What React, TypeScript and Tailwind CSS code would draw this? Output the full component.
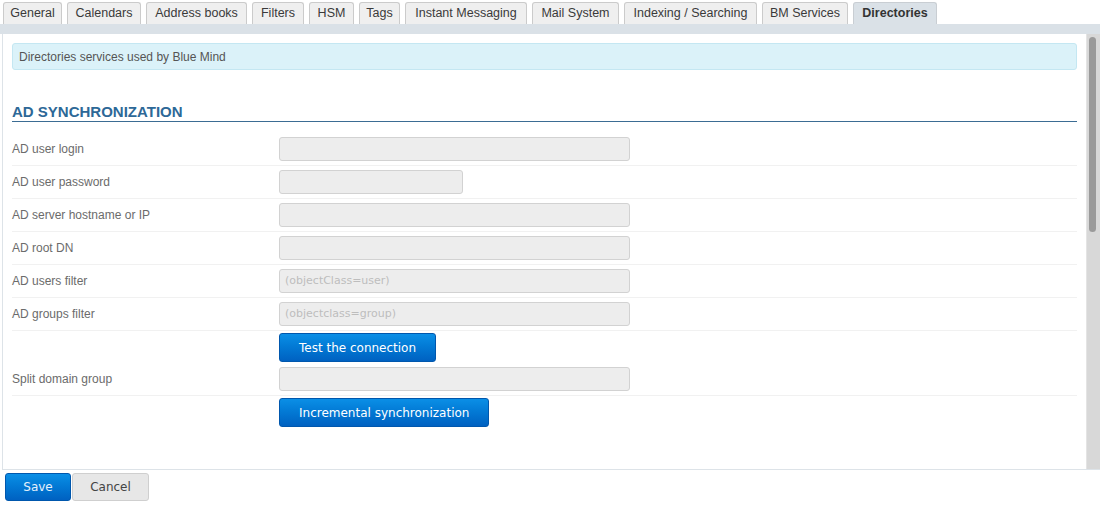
const tabs = [
  { label: "General", w: "w-[59px]" },
  { label: "Calendars", w: "w-[74px]" },
  { label: "Address books", w: "w-[101px]" },
  { label: "Filters", w: "w-[52px]" },
  { label: "HSM", w: "w-[45px]" },
  { label: "Tags", w: "w-[41px]" },
  { label: "Instant Messaging", w: "w-[122px]" },
  { label: "Mail System", w: "w-[87px]" },
  { label: "Indexing / Searching", w: "w-[133px]" },
  { label: "BM Services", w: "w-[86px]" },
  { label: "Directories", w: "w-[84px]", active: true },
];

function Field({ label, width = "w-[351px]", placeholder = "" }: { label: string; width?: string; placeholder?: string }) {
  return (
    <div className="flex items-center py-[4px] border-b border-[#f1f1f1]">
      <div className="w-[267px] text-[12px] text-[#6b6b6b]">{label}</div>
      <div
        className={`${width} h-[24px] rounded-[3px] border border-[#d2d2d2] bg-[#ededed] flex items-center px-[5px] font-['DejaVu_Sans',sans-serif] text-[11px] text-[#bdbdbd]`}
      >
        {placeholder}
      </div>
    </div>
  );
}

function BlueButton({ children, className = "" }: { children: React.ReactNode; className?: string }) {
  return (
    <button
      className={`h-[29px] px-[19px] rounded-[3px] border border-[#0057ad] bg-linear-to-b from-[#0b8fe6] to-[#0061c1] text-white font-['DejaVu_Sans',sans-serif] text-[12px] ${className}`}
    >
      {children}
    </button>
  );
}

export default function App() {
  return (
    <div className="w-[1100px] h-[508px] bg-white flex flex-col font-['Liberation_Sans',Arial,sans-serif] overflow-hidden">
      {/* tabs */}
      <div className="flex gap-[5px] pt-[2px] pl-[3px]">
        {tabs.map((t) => (
          <div
            key={t.label}
            className={
              t.active
                ? `${t.w} h-[22px] flex items-center justify-center rounded-t-[3px] border border-b-0 border-[#c9ced3] bg-[#dae1e7] text-[12.5px] font-bold text-[#333]`
                : `${t.w} h-[22px] flex items-center justify-center rounded-t-[3px] border border-b-0 border-[#cbcbcb] bg-[#efefef] text-[12.5px] text-[#3a3a3a]`
            }
          >
            {t.label}
          </div>
        ))}
      </div>
      <div className="h-[10px] bg-[#dae1e7]" />

      {/* panel */}
      <div className="flex h-[436px] ml-[2px] border-l border-b border-[#dde3e8]">
        <div className="flex-1 p-[9px]">
          <div className="h-[27px] flex items-center px-[6px] rounded-[3px] border border-[#c4e7f2] bg-[#dbf2f9] text-[12px] text-[#555]">
            Directories services used by Blue Mind
          </div>

          <h2 className="mt-[33px] leading-[18px] text-[15px] font-bold text-[#2d6897] border-b border-[#3b6c93]">
            AD SYNCHRONIZATION
          </h2>

          <div className="mt-[11px] flex flex-col">
            <Field label="AD user login" />
            <Field label="AD user password" width="w-[184px]" />
            <Field label="AD server hostname or IP" />
            <Field label="AD root DN" />
            <Field label="AD users filter" placeholder="(objectClass=user)" />
            <Field label="AD groups filter" placeholder="(objectclass=group)" />
            <div className="flex pt-[2px] pb-[1px] pl-[267px]">
              <BlueButton>Test the connection</BlueButton>
            </div>
            <Field label="Split domain group" />
            <div className="flex pt-[2px] pl-[267px]">
              <BlueButton>Incremental synchronization</BlueButton>
            </div>
          </div>
        </div>

        {/* scrollbar */}
        <div className="w-[14px] bg-[#d8d8d8] border-l border-[#e4e4e4] pt-[3px] pl-[2px]">
          <div className="w-[7px] h-[195px] rounded-full bg-[#9a9a9a]" />
        </div>
      </div>

      {/* footer */}
      <div className="flex pt-[3px] pl-[5px] font-['DejaVu_Sans',sans-serif] text-[12px]">
        <button className="w-[66px] h-[28px] rounded-[3px] border border-[#0057ad] bg-linear-to-b from-[#0b8fe6] to-[#0061c1] text-[#e6f1fc]">
          Save
        </button>
        <button className="w-[77px] h-[28px] ml-[1px] rounded-[3px] border border-[#cfcfcf] bg-[#e7e7e7] text-[#444]">
          Cancel
        </button>
      </div>
    </div>
  );
}
